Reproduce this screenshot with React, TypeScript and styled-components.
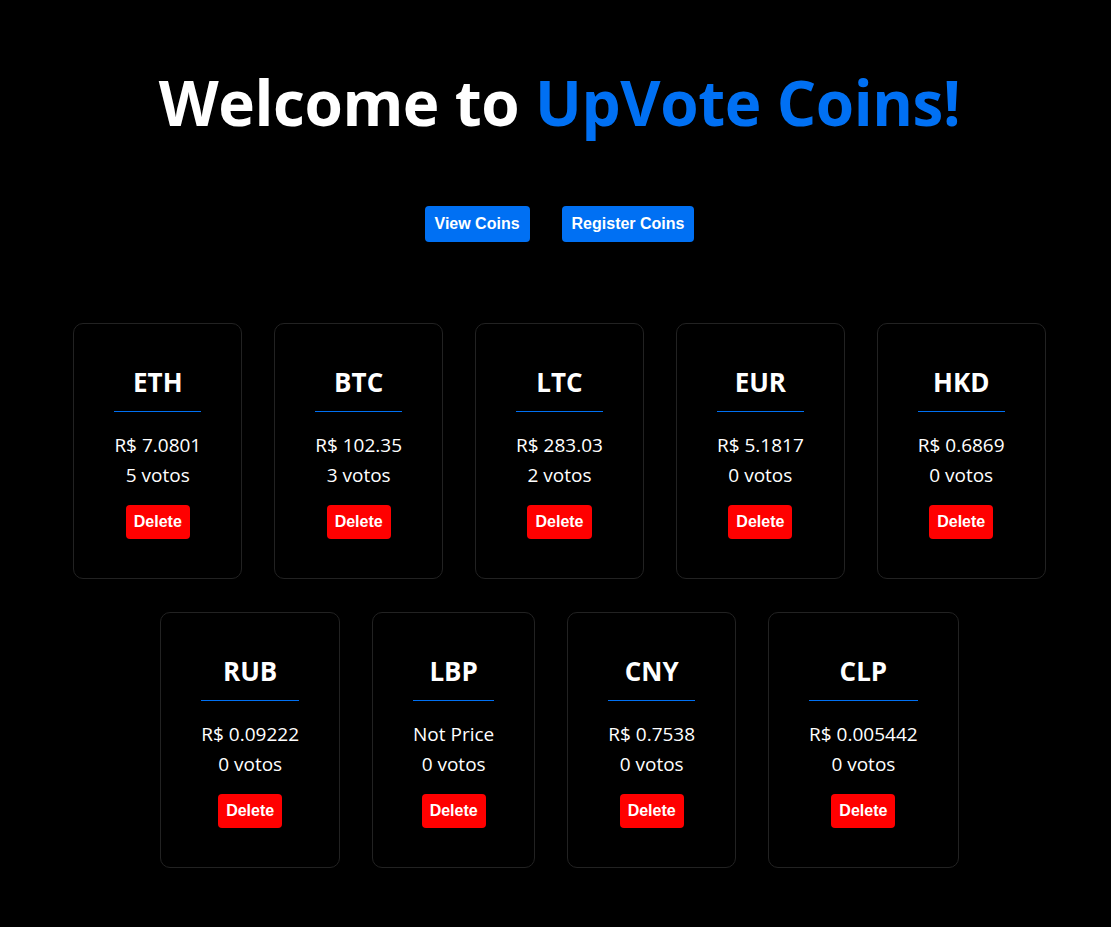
import React from "react";
import styled, { createGlobalStyle } from "styled-components";

const GlobalStyle = createGlobalStyle`
  html, body {
    margin: 0;
    padding: 0;
    background: #000;
  }
  body {
    font-family: "Open Sans", "Noto Sans", sans-serif;
    color: #fff;
  }
`;

const Page = styled.main`
  min-height: 927px;
  background: #000;
  display: flex;
  flex-direction: column;
  align-items: center;
  padding: 57px 0 0 8px;
  box-sizing: border-box;
`;

const Title = styled.h1`
  margin: 0;
  font-family: "Open Sans", sans-serif;
  font-weight: 700;
  font-size: 62px;
  line-height: 90px;
  letter-spacing: -0.4px;
  color: #fff;
`;

const Accent = styled.span`
  color: #0070f3;
`;

const Nav = styled.nav`
  display: flex;
  gap: 32px;
  margin-top: 59px;
`;

const NavButton = styled.button`
  background: #0070f3;
  color: #fff;
  border: none;
  border-radius: 4px;
  font-family: "Liberation Sans", Arial, sans-serif;
  font-weight: 700;
  font-size: 16px;
  line-height: 18px;
  padding: 9px 10px;
  cursor: pointer;
`;

const Grid = styled.section`
  display: flex;
  flex-wrap: wrap;
  justify-content: center;
  gap: 33px 32px;
  margin-top: 81px;
  max-width: 1000px;
`;

const Card = styled.div`
  border: 1px solid #222;
  border-radius: 10px;
  padding: 40px 40px 39px;
  display: flex;
  flex-direction: column;
  align-items: center;
  text-align: center;
`;

const Symbol = styled.h2`
  margin: 0;
  font-size: 26px;
  font-weight: 700;
  line-height: 36px;
`;

const Divider = styled.hr`
  align-self: stretch;
  border: none;
  height: 1px;
  background: #0070f3;
  margin: 11px 0 18px;
`;

const Info = styled.p`
  margin: 0;
  font-size: 19px;
  line-height: 30px;
  white-space: nowrap;
`;

const DeleteButton = styled.button`
  margin-top: 15px;
  background: #ff0000;
  color: #fff;
  border: none;
  border-radius: 4px;
  font-family: "Liberation Sans", Arial, sans-serif;
  font-weight: 700;
  font-size: 16px;
  line-height: 18px;
  padding: 8px 8px;
  cursor: pointer;
`;

const coins = [
  { symbol: "ETH", price: "R$ 7.0801", votes: 5 },
  { symbol: "BTC", price: "R$ 102.35", votes: 3 },
  { symbol: "LTC", price: "R$ 283.03", votes: 2 },
  { symbol: "EUR", price: "R$ 5.1817", votes: 0 },
  { symbol: "HKD", price: "R$ 0.6869", votes: 0 },
  { symbol: "RUB", price: "R$ 0.09222", votes: 0 },
  { symbol: "LBP", price: "Not Price", votes: 0 },
  { symbol: "CNY", price: "R$ 0.7538", votes: 0 },
  { symbol: "CLP", price: "R$ 0.005442", votes: 0 },
];

export default function App() {
  return (
    <>
      <GlobalStyle />
      <Page>
        <Title>
          Welcome to <Accent>UpVote Coins!</Accent>
        </Title>
        <Nav>
          <NavButton>View Coins</NavButton>
          <NavButton>Register Coins</NavButton>
        </Nav>
        <Grid>
          {coins.map((c) => (
            <Card key={c.symbol}>
              <Symbol>{c.symbol}</Symbol>
              <Divider />
              <Info>{c.price}</Info>
              <Info>{c.votes} votos</Info>
              <DeleteButton>Delete</DeleteButton>
            </Card>
          ))}
        </Grid>
      </Page>
    </>
  );
}
